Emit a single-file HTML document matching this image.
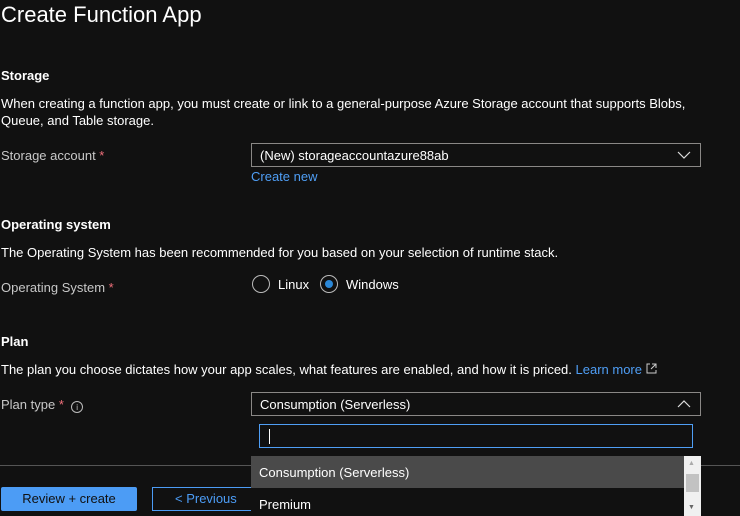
<!DOCTYPE html>
<html><head><style>
*{margin:0;padding:0;box-sizing:border-box}
body{width:740px;height:516px;background:#111111;color:#fff;font-family:"Liberation Sans",sans-serif;font-size:13px;position:relative;overflow:hidden}
.a{position:absolute;white-space:nowrap}
.h{font-weight:bold}
.lbl{color:#c8c8c8}
.req{color:#f1707b}
.box{position:absolute;border:1px solid #8a8886;background:#111}
.link{color:#4f9ef5}
.chev{position:absolute;right:9px;top:5px}
</style></head><body>
<div class="a" style="left:1px;top:2px;font-size:22px;">Create Function App</div>

<div class="a h" style="left:1px;top:68px;">Storage</div>
<div class="a" style="left:1px;top:96px;">When creating a function app, you must create or link to a general-purpose Azure Storage account that supports Blobs,</div>
<div class="a" style="left:1px;top:113px;">Queue, and Table storage.</div>
<div class="a lbl" style="left:1px;top:148px;">Storage account <span class="req">*</span></div>
<div class="box" style="left:251px;top:143px;width:450px;height:24px;"><span class="a" style="left:8px;top:4px;">(New) storageaccountazure88ab</span>
<svg class="chev" width="14" height="12" viewBox="0 0 14 12"><path d="M1 3l6 6 6-6" stroke="#ddd" fill="none" stroke-width="1.2"/></svg></div>
<div class="a link" style="left:251px;top:169px;">Create new</div>

<div class="a h" style="left:1px;top:217px;">Operating system</div>
<div class="a" style="left:1px;top:245px;">The Operating System has been recommended for you based on your selection of runtime stack.</div>
<div class="a lbl" style="left:1px;top:280px;">Operating System <span class="req">*</span></div>
<div class="a" style="left:252px;top:275px;width:18px;height:18px;border:1px solid #bbb;border-radius:50%"></div>
<div class="a" style="left:278px;top:277px;">Linux</div>
<div class="a" style="left:320px;top:275px;width:18px;height:18px;border:1px solid #bbb;border-radius:50%"><div style="position:absolute;left:4px;top:4px;width:8px;height:8px;border-radius:50%;background:#2b88d8"></div></div>
<div class="a" style="left:346px;top:277px;">Windows</div>

<div class="a h" style="left:1px;top:334px;">Plan</div>
<div class="a" style="left:1px;top:362px;">The plan you choose dictates how your app scales, what features are enabled, and how it is priced. <span class="link">Learn more</span> <svg width="11" height="11" viewBox="0 0 11 11"><path d="M4 1H1v9h9V7M6 1h4v4M10 1L5 6" stroke="#ccc" fill="none"/></svg></div>
<div class="a lbl" style="left:1px;top:397px;">Plan type <span class="req">*</span> &nbsp;<span style="display:inline-block;width:12px;height:12px;border:1px solid #bbb;border-radius:50%;font-size:8px;text-align:center;line-height:11px;vertical-align:-1px">i</span></div>
<div class="box" style="left:251px;top:392px;width:450px;height:24px;"><span class="a" style="left:8px;top:4px;">Consumption (Serverless)</span>
<svg class="chev" width="14" height="12" viewBox="0 0 14 12"><path d="M1 9l6-6 6 6" stroke="#ddd" fill="none" stroke-width="1.2"/></svg></div>

<div class="a" style="left:0;top:465px;width:740px;height:1px;background:#555"></div>
<div class="a" style="left:251px;top:417px;width:450px;height:39px;background:#111"></div>
<div class="a" style="left:259px;top:424px;width:434px;height:24px;border:1px solid #4f9ef5;"><div style="position:absolute;left:9px;top:4px;width:1px;height:15px;background:#fff"></div></div>
<div class="a" style="left:251px;top:456px;width:450px;height:60px;background:#111"></div>
<div class="a" style="left:251px;top:456px;width:433px;height:32px;background:#4a4a4a"></div>
<div class="a" style="left:259px;top:465px;">Consumption (Serverless)</div>
<div class="a" style="left:259px;top:497px;">Premium</div>
<div class="a" style="left:684px;top:456px;width:17px;height:60px;background:#f0f0f0"></div>
<div class="a" style="left:686px;top:474px;width:13px;height:18px;background:#c2c2c2"></div>
<div class="a" style="left:688px;top:460px;font-size:7px;color:#aaa">▲</div>
<div class="a" style="left:688px;top:504px;font-size:7px;color:#666">▼</div>

<div class="a" style="left:1px;top:487px;width:136px;height:24px;background:#4c9cf5;border-radius:2px;color:#111;text-align:center;line-height:24px;">Review + create</div>
<div class="a" style="left:152px;top:487px;width:99px;height:24px;border:1px solid #4c9cf5;border-right:none;color:#4c9cf5;padding-left:22px;line-height:22px;">&lt; Previous</div>
</body></html>
